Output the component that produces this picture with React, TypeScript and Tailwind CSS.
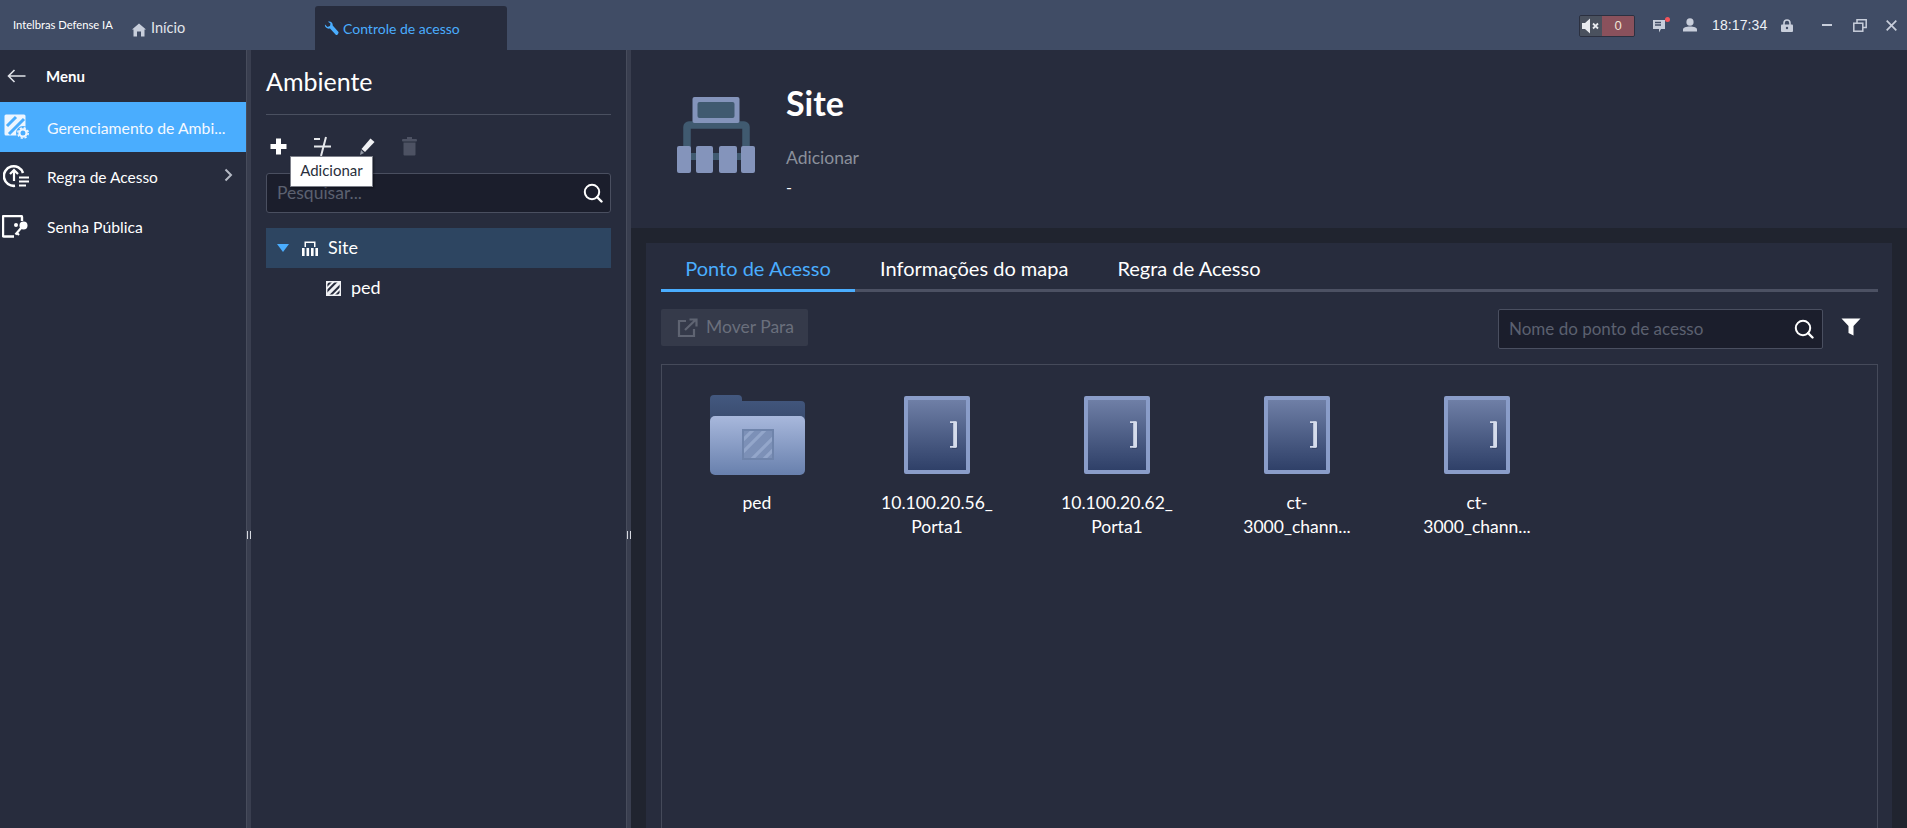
import React from "react";

const Hatch = ({ size, fg, bg, id }: { size: number; fg: string; bg: string; id: string }) => (
  <svg width={size} height={size} viewBox="0 0 16 16">
    <defs>
      <clipPath id={id}><rect x="1.5" y="1.5" width="13" height="13" /></clipPath>
    </defs>
    <rect x="0" y="0" width="16" height="16" fill={bg} />
    <g clipPath={`url(#${id})`} stroke={fg} strokeWidth="2.2">
      <path d="M-2 8 L8 -2 M-2 14 L14 -2 M2 18 L18 2 M8 18 L18 8" />
    </g>
  </svg>
);

const Door = () => (
  <div className="w-[66px] h-[78px] rounded-[2px] border-[4px] border-[#8a9dc9] bg-gradient-to-b from-[#6f7fa6] to-[#2f4068] flex items-center justify-end pr-[8px]">
    <svg width="8" height="28" viewBox="0 0 8 28">
      <path d="M0.5 2 H5 V27 H0.5" fill="none" stroke="#1f2a45" strokeOpacity="0.35" strokeWidth="1.6" transform="translate(1.5 0.5)" />
      <path d="M0 1.2 H6 M0 25.8 H6" stroke="#d5dcec" strokeWidth="1.8" />
      <rect x="3.2" y="0.5" width="3.8" height="26" fill="#d5dcec" />
    </svg>
  </div>
);

const Folder = () => (
  <svg width="95" height="80" viewBox="0 0 95 80">
    <defs>
      <linearGradient id="fback" x1="0" y1="0" x2="0" y2="1">
        <stop offset="0" stopColor="#43587f" />
        <stop offset="1" stopColor="#384a6c" />
      </linearGradient>
      <linearGradient id="ffront" x1="0" y1="0" x2="0" y2="1">
        <stop offset="0" stopColor="#a8b8dc" />
        <stop offset="1" stopColor="#6880ad" />
      </linearGradient>
      <clipPath id="fhatch"><rect x="34" y="36" width="28" height="27" /></clipPath>
    </defs>
    <path d="M4 0 H28 a4 4 0 0 1 4 4 V6 H91 a4 4 0 0 1 4 4 V30 H0 V4 a4 4 0 0 1 4 -4 Z" fill="url(#fback)" />
    <rect x="0" y="21" width="95" height="59" rx="5" fill="url(#ffront)" />
    <rect x="32" y="34" width="32" height="31" fill="#6f84ab" />
    <rect x="34" y="36" width="28" height="27" fill="#7c90b7" />
    <g clipPath="url(#fhatch)" stroke="#93a6ca" strokeWidth="3.2">
      <path d="M30 48 L48 30 M30 60 L60 30 M38 68 L68 38 M50 68 L68 50" />
    </g>
  </svg>
);

const Item = ({ lines, icon }: { lines: string[]; icon: React.ReactNode }) => (
  <div className="w-[180px] flex flex-col items-center">
    <div className="h-[80px] flex items-center justify-center">{icon}</div>
    <div className="mt-[16px] text-[17.5px] leading-[24px] text-white text-center">
      {lines.map((l) => (
        <div key={l}>{l}</div>
      ))}
    </div>
  </div>
);

const SearchIcon = ({ size }: { size: number }) => (
  <svg width={size} height={size} viewBox="0 0 20 20" fill="none" stroke="#ffffff" strokeWidth="2">
    <circle cx="9" cy="9" r="7.2" />
    <path d="M14 14 L18.5 18.5" strokeLinecap="round" strokeWidth="2.4" />
  </svg>
);

const Grip = () => (
  <div className="w-[5px] shrink-0 flex justify-center bg-[#393e4f] border-l border-[#474c5c]">
    <div className="flex gap-[2px] mt-[481px] h-[8px]">
      <div className="w-[1px] h-[8px] bg-[#d5d8e0]" />
      <div className="w-[1px] h-[8px] bg-[#d5d8e0]" />
    </div>
  </div>
);

export default function App() {
  return (
    <div className="w-[1907px] h-[828px] overflow-hidden flex flex-col bg-[#272c3d] font-[Lato,sans-serif] text-white">
      {/* Top bar */}
      <header className="h-[50px] shrink-0 bg-[#404c65] flex items-end relative">
        <div className="self-start mt-[18px] ml-[13px] w-[119px] text-[11.2px] leading-[14px] text-white whitespace-nowrap">Intelbras Defense IA</div>
        <div className="w-[183px] h-[44px] flex items-center gap-[5px] text-[14.5px] text-[#e3e6ec]">
          <svg width="14" height="14" viewBox="0 0 14 14" className="mt-[3px]">
            <path d="M7 0.5 L14 6.5 L12.5 6.5 V13.5 H9 V8.5 H5 V13.5 H1.5 V6.5 H0 Z" fill="#c8cedb" />
          </svg>
          <span>Início</span>
        </div>
        <div className="w-[192px] h-[44px] bg-[#272c3d] rounded-t-[3px] flex items-center pl-[9px] gap-[4px] text-[14px] text-[#4aadfe]">
          <svg width="15" height="15" viewBox="0 0 15 15">
            <path d="M1 3.5 L3.5 6 L6 5 L6.5 2.5 L4 0.7 C6.5 -0.2 9 1.5 8.7 4.5 L14.5 11 C15 12 13 14.7 12 14 L6 7.5 C3 8.3 0.3 6 1 3.5 Z" fill="#4aadfe" />
          </svg>
          <span>Controle de acesso</span>
        </div>
        <div className="flex-1" />
        <div className="self-stretch flex items-center pr-[10px]">
          <div className="flex w-[56px] h-[22px] rounded-[2px] border border-[#2b3040] mt-[1px] overflow-hidden">
            <div className="w-[22px] bg-[#4a515e] flex items-center justify-center">
              <svg width="18" height="16" viewBox="0 0 18 16">
                <path d="M0 5 H3 L8 0.5 V15.5 L3 11 H0 Z" fill="#e8eaee" />
                <path d="M11 5.5 L16 10.5 M16 5.5 L11 10.5" stroke="#e8eaee" strokeWidth="1.8" />
              </svg>
            </div>
            <div className="flex-1 bg-[#8a515c] flex items-center justify-center text-[13px] font-['Liberation_Sans',sans-serif] text-[#f0e6d8]">0</div>
          </div>
          <div className="ml-[18px] w-[15px] h-[16px] relative">
            <svg width="14" height="15" viewBox="0 0 14 15" className="mt-[2px]">
              <path d="M0 1 H12 V10 H8 L6 13.5 V10 H0 Z" fill="#c8cedb" />
              <path d="M2 3.5 H8 M2 6 H8" stroke="#404c65" strokeWidth="1.3" />
            </svg>
            <div className="absolute top-[0px] right-[-2px] w-[5px] h-[5px] rounded-full bg-[#f2545b]" />
          </div>
          <svg width="14" height="14" viewBox="0 0 14 14" className="ml-[15px]">
            <ellipse cx="7" cy="4" rx="3.6" ry="3.8" fill="#c8cedb" />
            <path d="M0 13.5 V11.5 C0 9.5 3 8.5 7 8.5 C11 8.5 14 9.5 14 11.5 V13.5 Z" fill="#c8cedb" />
          </svg>
          <div className="ml-[15px] w-[56px] text-[14px] mt-[1px] tracking-[0.1px] font-['Liberation_Sans',sans-serif] text-[#edf0f5] whitespace-nowrap">18:17:34</div>
          <svg width="12" height="13" viewBox="0 0 12 13" className="ml-[13px]">
            <path d="M3 6 V4 a3 3 0 0 1 6 0 V6" fill="none" stroke="#c8cedb" strokeWidth="1.6" />
            <rect x="0" y="5.5" width="12" height="7.5" rx="1" fill="#c8cedb" />
            <circle cx="6" cy="9" r="1.2" fill="#404c65" />
          </svg>
          <div className="ml-[29px] w-[10px] h-[2px] bg-[#c8cedb]" />
          <svg width="14" height="13" viewBox="0 0 14 13" className="ml-[21px]" fill="none" stroke="#c8cedb" strokeWidth="1.5">
            <rect x="0.8" y="4.2" width="9" height="8" />
            <path d="M4 4 V0.8 H13.2 V8.5 H10" />
          </svg>
          <svg width="11" height="11" viewBox="0 0 11 11" className="ml-[19px]" stroke="#c8cedb" strokeWidth="1.7">
            <path d="M0.7 0.7 L10.3 10.3 M10.3 0.7 L0.7 10.3" />
          </svg>
        </div>
      </header>

      <div className="flex-1 flex min-h-0">
        {/* Sidebar */}
        <aside className="w-[246px] shrink-0">
          <div className="h-[52px] flex items-center">
            <svg width="19" height="14" viewBox="0 0 19 14" className="ml-[7px]" fill="none" stroke="#dfe2e8" strokeWidth="1.6">
              <path d="M18.5 7 H1.5 M7.5 1 L1.5 7 L7.5 13" />
            </svg>
            <span className="ml-[20px] text-[15px] font-bold mt-[1px]">Menu</span>
          </div>
          <div className="h-[50px] bg-[#4aadfe] flex items-center">
            <svg width="26" height="26" viewBox="0 0 26 26" className="ml-[4px]">
              <rect x="0.5" y="0.5" width="21" height="21" rx="1.5" fill="#eef6ff" />
              <path d="M3 12 L12 3 M5 20 L20 5 " stroke="#4aadfe" strokeWidth="3" />
              <circle cx="19" cy="19" r="7" fill="#4aadfe" />
              <circle cx="19" cy="19" r="3.6" fill="none" stroke="#eef6ff" strokeWidth="2.2" />
              <circle cx="19" cy="19" r="5.2" fill="none" stroke="#eef6ff" strokeWidth="1.6" strokeDasharray="2.2 1.9" />
            </svg>
            <span className="ml-[17px] mt-[1px] text-[15.8px] text-[#f4f9ff] whitespace-nowrap">Gerenciamento de Ambi...</span>
          </div>
          <div className="h-[50px] flex items-center relative">
            <svg width="27" height="26" viewBox="0 0 27 26" className="ml-[3px]" fill="none" stroke="#fff" strokeWidth="2.6">
              <path d="M20 9 A9.8 9.8 0 1 0 12 21.8" />
              <path d="M11 17 V6.5 M7 10 L11 6 L15 10" strokeWidth="2.2" />
              <path d="M16 13.5 H26 M16 17.5 H26 M16 21.5 H23" strokeWidth="2" />
            </svg>
            <span className="ml-[17px] mt-[2px] text-[15.5px] whitespace-nowrap">Regra de Acesso</span>
            <svg width="9" height="14" viewBox="0 0 9 14" className="absolute left-[224px] top-[16px]" fill="none" stroke="#b4b9c4" strokeWidth="2">
              <path d="M1.5 1.5 L7 7 L1.5 12.5" />
            </svg>
          </div>
          <div className="h-[50px] flex items-center">
            <svg width="27" height="24" viewBox="0 0 27 24" className="ml-[2px]" fill="none">
              <path d="M12 21.5 H2 a1 1 0 0 1 -1 -1 V2 a1 1 0 0 1 1 -1 H19 a1 1 0 0 1 1 1 V6" stroke="#fff" strokeWidth="2.4" />
              <circle cx="14" cy="10" r="2" fill="#fff" />
              <circle cx="21.5" cy="10.5" r="4" fill="#fff" />
              <path d="M19.5 12.5 L13.5 19.5 M15 18 L17 20" stroke="#fff" strokeWidth="2.2" />
            </svg>
            <span className="ml-[18px] mt-[1px] text-[15.7px] whitespace-nowrap">Senha Pública</span>
          </div>
        </aside>
        <Grip />

        {/* Tree panel */}
        <section className="w-[375px] shrink-0 px-[15px]">
          <div className="h-[65px] border-b border-[#4a5060] flex items-center">
            <h1 className="text-[25px] text-white font-normal">Ambiente</h1>
          </div>
          <div className="relative h-[58px] flex items-center pt-[6px] -ml-[9px]">
            <div className="w-[43px] flex justify-center -mt-[1px]">
              <svg width="17" height="17" viewBox="0 0 17 17"><path d="M6 0.5 H11 V6 H16.5 V11 H11 V16.5 H6 V11 H0.5 V6 H6 Z" fill="#fff" /></svg>
            </div>
            <div className="w-[46px] flex justify-center -mt-[1px]">
              <svg width="19" height="21" viewBox="0 0 19 21" fill="none" stroke="#e6e8ec" strokeWidth="2" className="-ml-[2px]">
                <path d="M1 10.5 H18 M13 1 L8 20 M1 3 H7" />
              </svg>
            </div>
            <div className="w-[42px] flex justify-center -mt-[1px]">
              <svg width="15" height="18" viewBox="0 0 15 18">
                <path d="M10.5 0.5 L14.5 4 L5 14 L1.5 11 Z" fill="#f0f1f4" />
                <path d="M1 12 L4 15 L0 17 Z" fill="#9298a5" />
              </svg>
            </div>
            <div className="w-[43px] flex justify-center -mt-[1px]">
              <svg width="15" height="19" viewBox="0 0 15 19" fill="#4d5263">
                <rect x="5" y="0" width="5" height="2" />
                <rect x="0" y="2" width="15" height="2.5" rx="1" />
                <path d="M1.5 5.5 H13.5 V17.5 a1 1 0 0 1 -1 1 H2.5 a1 1 0 0 1 -1 -1 Z" />
              </svg>
            </div>
            <div className="absolute z-10 left-[33px] top-[41px] w-[83px] h-[31px] pb-[2px] bg-white border border-[#7d808a] text-[#2a2f3c] text-[15px] flex items-center justify-center shadow-[1px_1px_2px_rgba(0,0,0,0.4)]">Adicionar</div>
          </div>
          <div className="h-[40px] rounded-[3px] border border-[#4a4f60] bg-[#1b1e2c] flex items-center pl-[10px] pr-[7px] justify-between">
            <span className="text-[17.5px] text-[#5c6170]">Pesquisar...</span>
            <SearchIcon size={20} />
          </div>
          <div className="mt-[15px] h-[40px] bg-[#2d4561] flex items-center">
            <svg width="12" height="8" viewBox="0 0 12 8" className="ml-[11px]"><path d="M0 0 H12 L6 8 Z" fill="#4aadfe" /></svg>
            <svg width="16" height="15" viewBox="0 0 16 15" className="ml-[13px]" fill="#fff">
              <path d="M2.5 0.5 H13.5 V6 H12 V2 H4 V6 H2.5 Z" />
              <rect x="0" y="7" width="2.6" height="8" />
              <rect x="4.5" y="7" width="2.6" height="8" />
              <rect x="9" y="7" width="2.6" height="8" />
              <rect x="13.4" y="7" width="2.6" height="8" />
            </svg>
            <span className="ml-[10px] -mt-[2px] text-[18px]">Site</span>
          </div>
          <div className="h-[40px] flex items-center pl-[60px]">
            <Hatch size={15} fg="#272c3d" bg="#f0f1f4" id="pedh" />
            <span className="ml-[10px] -mt-[2px] text-[18px]">ped</span>
          </div>
        </section>
        <Grip />

        {/* Main */}
        <main className="flex-1 min-w-0 flex flex-col bg-[#20242f]">
          <div className="h-[178px] shrink-0 bg-[#272c3d] flex">
            <svg width="78" height="76" viewBox="0 0 78 76" className="ml-[46px] mt-[47px] shrink-0">
              <path d="M10 54 V30 a2 2 0 0 1 2 -2 H67 a2 2 0 0 1 2 2 V54" fill="none" stroke="#405a70" strokeWidth="7.5" />
              <rect x="7" y="56" width="65" height="7" fill="#405a70" />
              <rect x="15.5" y="0" width="47" height="26" rx="2" fill="#8494bb" />
              <rect x="20.5" y="5" width="37" height="16" rx="2" fill="#405a70" />
              <rect x="0" y="49" width="14" height="27" rx="2" fill="#8494bb" />
              <rect x="19" y="49" width="17" height="27" rx="2" fill="#8494bb" />
              <rect x="42" y="49" width="18" height="27" rx="2" fill="#8494bb" />
              <rect x="64" y="49" width="14" height="27" rx="2" fill="#8494bb" />
            </svg>
            <div className="ml-[31px] flex flex-col">
              <div className="mt-[32px] text-[34px] leading-[42px] font-bold">Site</div>
              <div className="mt-[22px] text-[17.5px] leading-[24px] text-[#8b909b]">Adicionar</div>
              <div className="mt-[5px] text-[16px] leading-[24px]">-</div>
            </div>
          </div>
          <div className="flex-1 min-h-0 mt-[15px] ml-[15px] mr-[15px] bg-[#272c3d] pl-[15px] pr-[14px] flex flex-col">
            <div className="h-[49px] shrink-0 flex items-end border-b-[3px] border-[#4c5163] text-[20px]">
              <div className="w-[194px] h-[49px] -mb-[3px] pt-[3px] border-b-[3px] border-[#4aadfe] flex items-center justify-center text-[#4aadfe]">Ponto de Acesso</div>
              <div className="h-[49px] -mb-[3px] flex items-center ml-[25px]">Informações do mapa</div>
              <div className="h-[49px] -mb-[3px] flex items-center ml-[49px]">Regra de Acesso</div>
            </div>
            <div className="h-[40px] shrink-0 mt-[17px] flex items-start">
              <div className="w-[147px] h-[37px] rounded-[2px] bg-[#353a4a] flex items-center pl-[16px] gap-[8px] text-[17.5px] text-[#6a6f7c]">
                <svg width="21" height="20" viewBox="0 0 21 20" fill="none" stroke="#5f6472" strokeWidth="2.2">
                  <path d="M9 3 H2 V18 H17 V11" />
                  <path d="M8 12 L19 1.5 M12.5 1.5 H19.5 V8.5" />
                </svg>
                <span>Mover Para</span>
              </div>
              <div className="flex-1" />
              <div className="w-[325px] h-[40px] rounded-[2px] border border-[#4a4f60] bg-[#1b1e2c] flex items-center pl-[10px] pr-[8px] justify-between">
                <span className="text-[17px] text-[#5c6170]">Nome do ponto de acesso</span>
                <SearchIcon size={20} />
              </div>
              <div className="w-[55px] h-[40px] flex items-center justify-center">
                <svg width="20" height="18" viewBox="0 0 20 18" className="-mt-[4px]"><path d="M0.5 0.5 H19.5 L12.5 8 V17.5 L7.5 15 V8 Z" fill="#fff" /></svg>
              </div>
            </div>
            <div className="flex-1 mt-[15px] border border-[#454a5a] border-b-0 pt-[30px] pl-[5px] flex items-start">
              <Item lines={["ped"]} icon={<Folder />} />
              <Item lines={["10.100.20.56_", "Porta1"]} icon={<Door />} />
              <Item lines={["10.100.20.62_", "Porta1"]} icon={<Door />} />
              <Item lines={["ct-", "3000_chann..."]} icon={<Door />} />
              <Item lines={["ct-", "3000_chann..."]} icon={<Door />} />
            </div>
          </div>
        </main>
      </div>
    </div>
  );
}
